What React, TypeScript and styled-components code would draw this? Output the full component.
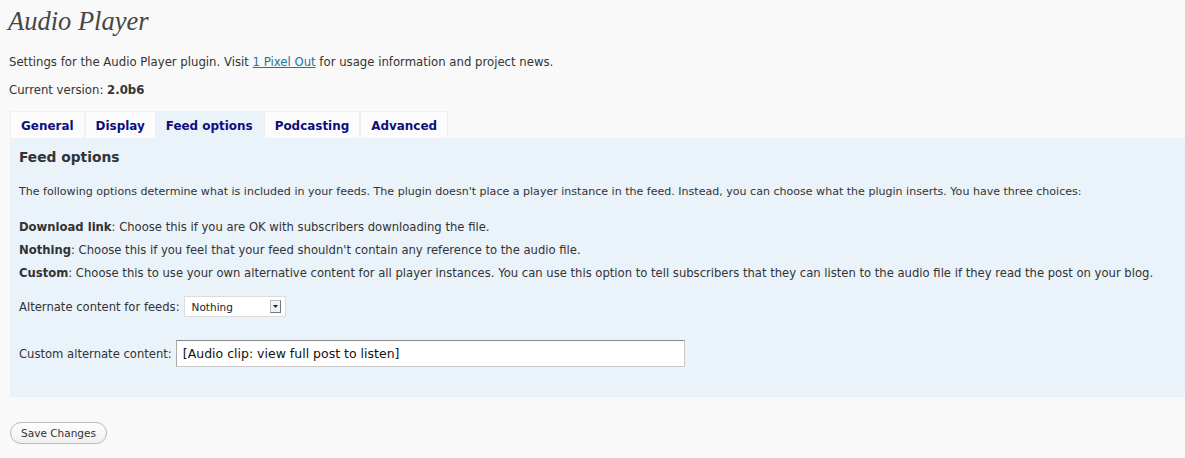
import React from "react";
import styled, { createGlobalStyle } from "styled-components";

const Global = createGlobalStyle`
  html, body { margin: 0; padding: 0; background: #f9f9f9; }
  body { font-family: "DejaVu Sans", "Lucida Grande", Verdana, sans-serif; color: #333; }
`;

const Wrap = styled.div`
  padding: 0 0 0 10px;
  width: 1175px;
  height: 458px;
  overflow: hidden;
`;

const Title = styled.h2`
  margin: 0 0 0 -2px;
  padding-top: 6px;
  height: 28px;
  font-family: "Liberation Serif", Georgia, serif;
  font-style: italic;
  font-weight: normal;
  font-size: 26.5px;
  line-height: 30px;
  color: #464646;
`;

const Text = styled.p<{ $top: number }>`
  margin: ${(p) => p.$top}px 0 0 -1px;
  font-size: 11.7px;
  line-height: 18px;
  color: #333;
`;

const Link = styled.a`
  color: #21759b;
  text-decoration: underline;
`;

const Tabs = styled.div`
  display: flex;
  margin-top: 12px;
  height: 27px;
`;

const Tab = styled.div<{ $active?: boolean }>`
  box-sizing: border-box;
  height: 27px;
  padding: 1px 10px 0;
  display: flex;
  align-items: center;
  font-size: 11.95px;
  font-weight: bold;
  color: #0e0e7c;
  background: ${(p) => (p.$active ? "#eaf2fa" : "#fcfcfc")};
  border: 1px solid ${(p) => (p.$active ? "#eaf2fa" : "#f1f1f1")};
  border-bottom: none;
  border-left: ${(p) => (p.$active ? "none" : "1px solid #f1f1f1")};
`;

const Panel = styled.div`
  background: #eaf2fa;
  height: 259px;
  box-sizing: border-box;
  padding: 9px 0 0 9px;
`;

const Heading = styled.h3`
  margin: 0;
  font-size: 13.8px;
  line-height: 20px;
  font-weight: bold;
  color: #333;
`;

const Para = styled.p<{ $top: number }>`
  margin: ${(p) => p.$top}px 0 0;
  font-size: 11.05px;
  line-height: 18px;
  color: #333;
`;

const Choice = styled.div`
  font-size: 11.6px;
  line-height: 18px;
  margin-bottom: 5px;
  color: #333;
`;

const Choices = styled.div`
  margin-top: 17px;
`;

const Row = styled.div<{ $top: number }>`
  display: flex;
  align-items: center;
  gap: 4px;
  margin-top: ${(p) => p.$top}px;
  font-size: 11.6px;
  color: #333;
`;

const Select = styled.div`
  box-sizing: border-box;
  width: 102px;
  height: 21px;
  background: #fff;
  border: 1px solid #dcdcdc;
  display: flex;
  align-items: center;
  justify-content: space-between;
  padding: 0 4px 0 7px;
  font-size: 10.5px;
  color: #222;
`;

const Arrow = styled.div`
  width: 11px;
  height: 13px;
  box-sizing: border-box;
  border: 1px solid #bbb;
  border-right-color: #777;
  border-bottom-color: #777;
  background: #f2f2f2;
  display: flex;
  align-items: center;
  justify-content: center;
`;

const Input = styled.div`
  box-sizing: border-box;
  width: 509px;
  height: 27px;
  background: #fff;
  border: 1px solid #c8c8c8;
  border-top-color: #888;
  border-left-color: #aaa;
  display: flex;
  align-items: center;
  padding-left: 6px;
  font-size: 12.5px;
  color: #111;
`;

const Button = styled.button`
  margin-top: 25px;
  box-sizing: border-box;
  width: 97px;
  height: 22px;
  border-radius: 11px;
  border: 1px solid #bbb;
  background: linear-gradient(#fefefe, #f0f0f0);
  font-family: "DejaVu Sans", sans-serif;
  font-size: 10.5px;
  color: #333;
  padding: 0;
`;

export default function App() {
  return (
    <>
      <Global />
      <Wrap>
        <Title>Audio Player</Title>
        <Text $top={19}>
          Settings for the Audio Player plugin. Visit <Link href="#">1 Pixel Out</Link> for usage
          information and project news.
        </Text>
        <Text $top={10}>
          Current version: <b>2.0b6</b>
        </Text>
        <Tabs>
          <Tab>General</Tab>
          <Tab>Display</Tab>
          <Tab $active>Feed options</Tab>
          <Tab>Podcasting</Tab>
          <Tab>Advanced</Tab>
        </Tabs>
        <Panel>
          <Heading>Feed options</Heading>
          <Para $top={16}>
            The following options determine what is included in your feeds. The plugin doesn't
            place a player instance in the feed. Instead, you can choose what the plugin inserts.
            You have three choices:
          </Para>
          <Choices>
            <Choice>
              <b>Download link</b>: Choose this if you are OK with subscribers downloading the file.
            </Choice>
            <Choice>
              <b>Nothing</b>: Choose this if you feel that your feed shouldn't contain any reference
              to the audio file.
            </Choice>
            <Choice>
              <b>Custom</b>: Choose this to use your own alternative content for all player
              instances. You can use this option to tell subscribers that they can listen to the
              audio file if they read the post on your blog.
            </Choice>
          </Choices>
          <Row $top={14}>
            Alternate content for feeds:
            <Select>
              Nothing
              <Arrow>
                <svg width="5" height="3" viewBox="0 0 5 3">
                  <path d="M0 0H5L2.5 3Z" fill="#222" />
                </svg>
              </Arrow>
            </Select>
          </Row>
          <Row $top={23}>
            Custom alternate content:
            <Input>[Audio clip: view full post to listen]</Input>
          </Row>
        </Panel>
        <Button>Save Changes</Button>
      </Wrap>
    </>
  );
}
